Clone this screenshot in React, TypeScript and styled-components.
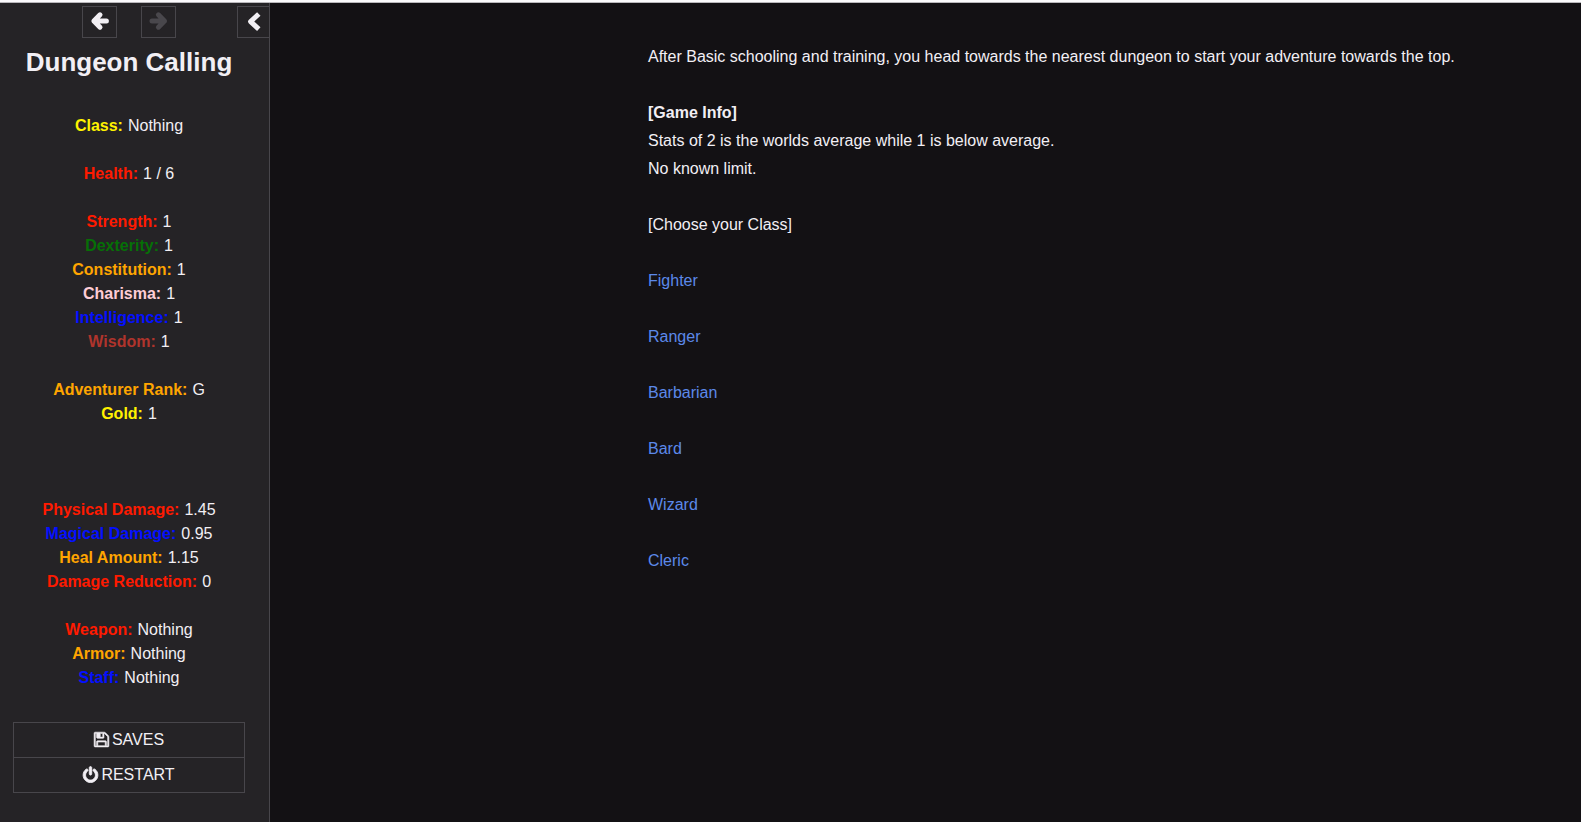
import React from "react";
import styled, { createGlobalStyle } from "styled-components";

const GlobalStyle = createGlobalStyle`
  * { box-sizing: border-box; }
  body {
    margin: 0;
    background: #131114;
    color: #f2eff4;
    font: 16px/24px "Liberation Sans", Arial, Helvetica, sans-serif;
  }
`;

const Page = styled.div`
  display: flex;
  min-height: 100vh;
  border-top: 2px solid #fbfafc;
  box-shadow: inset 0 1px 0 #b9b7bb;
`;

const Sidebar = styled.aside`
  flex: none;
  width: 270px;
  margin-top: 1px;
  background: #252326;
  border-right: 1px solid #48464b;
`;

const Tray = styled.div`
  display: flex;
  justify-content: flex-end;
  padding-top: 3px;
`;

const History = styled.div`
  display: flex;
  gap: 24px;
  margin-right: 61px;
`;

const TrayButton = styled.button<{ $edge?: boolean }>`
  display: flex;
  align-items: center;
  justify-content: center;
  width: ${(p) => (p.$edge ? 32 : 35)}px;
  height: 32px;
  padding: 0;
  background: transparent;
  border: 1px solid #48464b;
  border-right-width: ${(p) => (p.$edge ? 0 : 1)}px;
  color: #f2eff4;
  cursor: pointer;

  &:disabled {
    color: #49474c;
    cursor: default;
  }
`;

const SidebarBody = styled.div`
  padding: 0 24px 24px 13px;
  text-align: center;
`;

const Title = styled.h1`
  margin: 8px 0 0;
  font-size: 26px;
  line-height: 32px;
`;

const StatGroup = styled.dl<{ $space: number }>`
  margin: ${(p) => p.$space}px 0 0;
`;

const Stat = styled.div`
  display: flex;
  justify-content: center;
  gap: 5px;
`;

const StatName = styled.dt<{ $color: string }>`
  color: ${(p) => p.$color};
  font-weight: bold;
`;

const StatValue = styled.dd`
  margin: 0;
`;

const Menu = styled.ul`
  margin: 32px 0 0;
  padding: 0;
  list-style: none;
  border: 1px solid #48464b;
`;

const MenuItem = styled.li`
  & + & {
    border-top: 1px solid #48464b;
  }
`;

const MenuButton = styled.button`
  display: flex;
  align-items: center;
  justify-content: center;
  gap: 2px;
  width: 100%;
  height: 34px;
  padding: 0;
  background: transparent;
  border: 0;
  color: inherit;
  font: inherit;
  text-transform: uppercase;
  cursor: pointer;
`;

const Story = styled.main`
  flex: 1;
  min-width: 0;
  padding: 41px 69px 40px 24px;
  line-height: 28px;
`;

const Passage = styled.article`
  max-width: 864px;
  margin-left: auto;
`;

const Paragraph = styled.p`
  margin: 0 0 28px;
`;

const Choices = styled.ul`
  display: grid;
  gap: 28px;
  margin: 0;
  padding: 0;
  list-style: none;
`;

const ChoiceLink = styled.a`
  color: #5c89ea;
  text-decoration: none;

  &:hover {
    text-decoration: underline;
  }
`;

const StrokeIcon = styled.svg`
  fill: none;
  stroke: currentColor;
  stroke-width: 5;
  stroke-linejoin: round;
  overflow: visible;
`;

const SolidIcon = styled.svg`
  fill: currentColor;
  stroke: currentColor;
  overflow: visible;
`;

const ArrowLeft = () => (
  <StrokeIcon width="20" height="20" viewBox="0 0 20 20" strokeLinecap="round" aria-hidden="true">
    <path d="M10 2.8L3.9 9L10 15.2M4 9H16.4" />
  </StrokeIcon>
);

const ArrowRight = () => (
  <StrokeIcon width="20" height="20" viewBox="0 0 20 20" strokeLinecap="round" aria-hidden="true">
    <path d="M9.4 2.8L15.5 9L9.4 15.2M15.4 9H3" />
  </StrokeIcon>
);

const ChevronLeft = () => (
  <StrokeIcon width="20" height="20" viewBox="0 0 20 20" aria-hidden="true">
    <path d="M14.8 2L6.6 9.6L14.8 17.2" />
  </StrokeIcon>
);

const SaveIcon = () => (
  <SolidIcon width="16" height="16" viewBox="116 112 1664 1664" strokeWidth="60" aria-hidden="true">
    <path d="M512 1536h768v-384h-768v384zm896 0h128v-896q0-14-10-38.5t-20-34.5l-281-281q-10-10-34-20t-39-10v416q0 40-28 68t-68 28h-576q-40 0-68-28t-28-68v-416h-128v1280h128v-416q0-40 28-68t68-28h832q40 0 68 28t28 68v416zm-384-928v-320q0-13-9.5-22.5t-22.5-9.5h-192q-13 0-22.5 9.5t-9.5 22.5v320q0 13 9.5 22.5t22.5 9.5h192q13 0 22.5-9.5t9.5-22.5zm640 32v928q0 40-28 68t-68 28h-1344q-40 0-68-28t-28-68v-1344q0-40 28-68t68-28h928q40 0 88 20t76 48l280 280q28 28 48 76t20 88z" />
  </SolidIcon>
);

const PowerIcon = () => (
  <SolidIcon width="16" height="16" viewBox="116 52 1664 1664" strokeWidth="90" aria-hidden="true">
    <path d="M1664 896q0 156-61 298t-164 245-245 164-298 61-298-61-245-164-164-245-61-298q0-182 80.5-343t226.5-270q43-32 95.5-25t83.5 50q32 42 24.5 94.5t-49.5 84.5q-98 74-151.5 181t-53.5 228q0 104 40.5 198.5t109.5 163.5 163.5 109.5 198.5 40.5 198.5-40.5 163.5-109.5 109.5-163.5 40.5-198.5q0-121-53.5-228t-151.5-181q-42-32-49.5-84.5t24.5-94.5q31-43 84-50t95 25q146 109 226.5 270t80.5 343zm-640-768v640q0 52-38 90t-90 38-90-38-38-90v-640q0-52 38-90t90-38 90 38 38 90z" />
  </SolidIcon>
);

const RED = "#ff1a00";
const ORANGE = "#ffa500";
const YELLOW = "#fff200";
const GREEN = "#067006";
const BLUE = "#0410ff";
const PINK = "#ffcdd6";
const BROWN = "#b0342c";

type StatEntry = [name: string, color: string, value: string];

const statGroups: { space: number; stats: StatEntry[] }[] = [
  { space: 36, stats: [["Class", YELLOW, "Nothing"]] },
  { space: 24, stats: [["Health", RED, "1 / 6"]] },
  {
    space: 24,
    stats: [
      ["Strength", RED, "1"],
      ["Dexterity", GREEN, "1"],
      ["Constitution", ORANGE, "1"],
      ["Charisma", PINK, "1"],
      ["Intelligence", BLUE, "1"],
      ["Wisdom", BROWN, "1"],
    ],
  },
  {
    space: 24,
    stats: [
      ["Adventurer Rank", ORANGE, "G"],
      ["Gold", YELLOW, "1"],
    ],
  },
  {
    space: 72,
    stats: [
      ["Physical Damage", RED, "1.45"],
      ["Magical Damage", BLUE, "0.95"],
      ["Heal Amount", ORANGE, "1.15"],
      ["Damage Reduction", RED, "0"],
    ],
  },
  {
    space: 24,
    stats: [
      ["Weapon", RED, "Nothing"],
      ["Armor", ORANGE, "Nothing"],
      ["Staff", BLUE, "Nothing"],
    ],
  },
];

const classes = ["Fighter", "Ranger", "Barbarian", "Bard", "Wizard", "Cleric"];

export default function App() {
  return (
    <>
      <GlobalStyle />
      <Page>
        <Sidebar>
          <Tray>
            <History>
              <TrayButton aria-label="Go back">
                <ArrowLeft />
              </TrayButton>
              <TrayButton aria-label="Go forward" disabled>
                <ArrowRight />
              </TrayButton>
            </History>
            <TrayButton $edge aria-label="Toggle the side bar">
              <ChevronLeft />
            </TrayButton>
          </Tray>
          <SidebarBody>
            <Title>Dungeon Calling</Title>
            {statGroups.map(({ space, stats }) => (
              <StatGroup key={stats[0][0]} $space={space}>
                {stats.map(([name, color, value]) => (
                  <Stat key={name}>
                    <StatName $color={color}>{name}:</StatName>
                    <StatValue>{value}</StatValue>
                  </Stat>
                ))}
              </StatGroup>
            ))}
            <Menu>
              <MenuItem>
                <MenuButton>
                  <SaveIcon />
                  Saves
                </MenuButton>
              </MenuItem>
              <MenuItem>
                <MenuButton>
                  <PowerIcon />
                  Restart
                </MenuButton>
              </MenuItem>
            </Menu>
          </SidebarBody>
        </Sidebar>
        <Story>
          <Passage>
            <Paragraph>
              After Basic schooling and training, you head towards the nearest dungeon to start your
              adventure towards the top.
            </Paragraph>
            <Paragraph>
              <b>[Game Info]</b>
              <br />
              Stats of 2 is the worlds average while 1 is below average.
              <br />
              No known limit.
            </Paragraph>
            <Paragraph>[Choose your Class]</Paragraph>
            <Choices>
              {classes.map((name) => (
                <li key={name}>
                  <ChoiceLink href="#">{name}</ChoiceLink>
                </li>
              ))}
            </Choices>
          </Passage>
        </Story>
      </Page>
    </>
  );
}
